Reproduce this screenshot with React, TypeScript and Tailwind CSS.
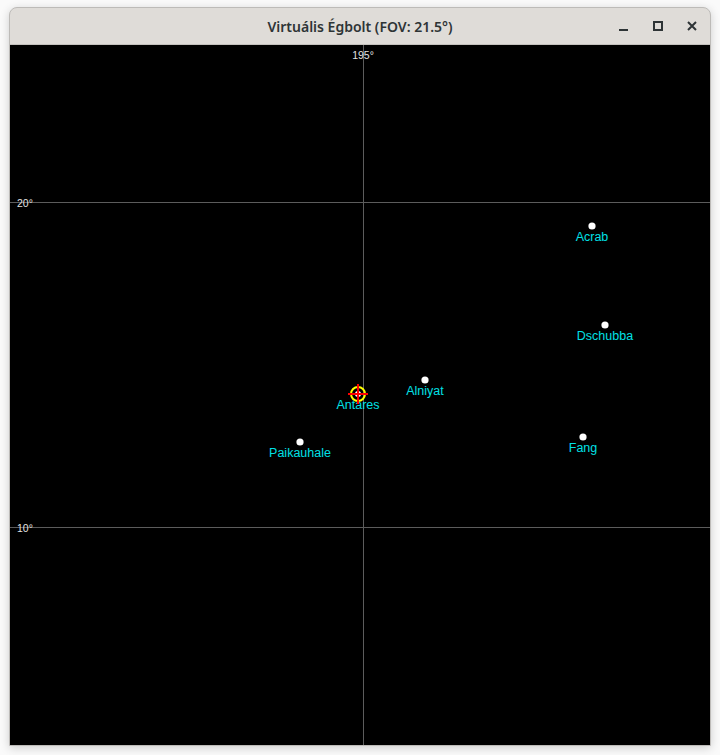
import React from 'react'

interface Star {
  name: string
  x: number
  y: number
}

// positions are in canvas pixels (700 x 700 view)
const stars: Star[] = [
  { name: 'Acrab', x: 582, y: 181 },
  { name: 'Dschubba', x: 595, y: 280 },
  { name: 'Alniyat', x: 415, y: 335 },
  { name: 'Paikauhale', x: 290, y: 397 },
  { name: 'Fang', x: 573, y: 392 },
]

const target = { name: 'Antares', x: 348, y: 349 }

function SkyCanvas() {
  return (
    <svg width={700} height={700} className="block" style={{ fontFamily: '"Liberation Sans", Arial, sans-serif' }}>
      <rect width={700} height={700} fill="#000" />
      {/* grid */}
      <line x1={353.5} y1={0} x2={353.5} y2={700} stroke="#5c5c5c" strokeWidth={1} />
      <line x1={0} y1={157.5} x2={700} y2={157.5} stroke="#5c5c5c" strokeWidth={1} />
      <line x1={0} y1={482.5} x2={700} y2={482.5} stroke="#5c5c5c" strokeWidth={1} />
      <text x={353} y={14} fill="#e2e2e2" fontSize={10.5} textAnchor="middle">195°</text>
      <text x={7} y={161.5} fill="#e2e2e2" fontSize={10.5}>20°</text>
      <text x={7} y={486.5} fill="#e2e2e2" fontSize={10.5}>10°</text>

      {stars.map(s => (
        <g key={s.name}>
          <circle cx={s.x} cy={s.y} r={3.6} fill="#fff" />
          <text x={s.x} y={s.y + 14.5} fill="#00e0e6" fontSize={12.5} textAnchor="middle">{s.name}</text>
        </g>
      ))}

      {/* selected star */}
      <circle cx={target.x} cy={target.y} r={3} fill="#fff" />
      <circle cx={target.x} cy={target.y} r={7} fill="none" stroke="#ffff00" strokeWidth={2} />
      <text x={target.x} y={target.y + 14.5} fill="#00e0e6" fontSize={12.5} textAnchor="middle">{target.name}</text>
      <line x1={target.x - 10} y1={target.y} x2={target.x + 10} y2={target.y} stroke="#ff0000" strokeWidth={2} />
      <line x1={target.x} y1={target.y - 10} x2={target.x} y2={target.y + 10} stroke="#ff0000" strokeWidth={2} />
    </svg>
  )
}

export default function App() {
  return (
    <div className="w-[720px] h-[755px] bg-[#fafafa] overflow-hidden pt-[7px] pl-[9px]">
      <div className="w-[702px] rounded-t-[8px] border border-[#bdbbb8] bg-[#dfdcd8] shadow-[0_2px_10px_rgba(0,0,0,0.18)]">
        <div className="relative flex h-[37px] items-center justify-center border-b border-[#c4c1bd]">
          <span className="text-[14px] font-semibold text-[#2e3436]" style={{ fontFamily: '"Noto Sans", Inter, sans-serif' }}>
            Virtuális Égbolt (FOV: 21.5°)
          </span>
          <div className="absolute right-[11px] top-0 flex h-full items-center gap-[20px]">
            <svg width={14} height={14} viewBox="0 0 14 14">
              <rect x={2} y={10} width={9} height={2} fill="#2e3436" />
            </svg>
            <svg width={14} height={14} viewBox="0 0 14 14">
              <rect x={3} y={3} width={8} height={8} fill="none" stroke="#2e3436" strokeWidth={2} />
            </svg>
            <svg width={14} height={14} viewBox="0 0 14 14">
              <path d="M3 3 L11 11 M11 3 L3 11" stroke="#2e3436" strokeWidth={2} />
            </svg>
          </div>
        </div>
        <SkyCanvas />
      </div>
    </div>
  )
}
